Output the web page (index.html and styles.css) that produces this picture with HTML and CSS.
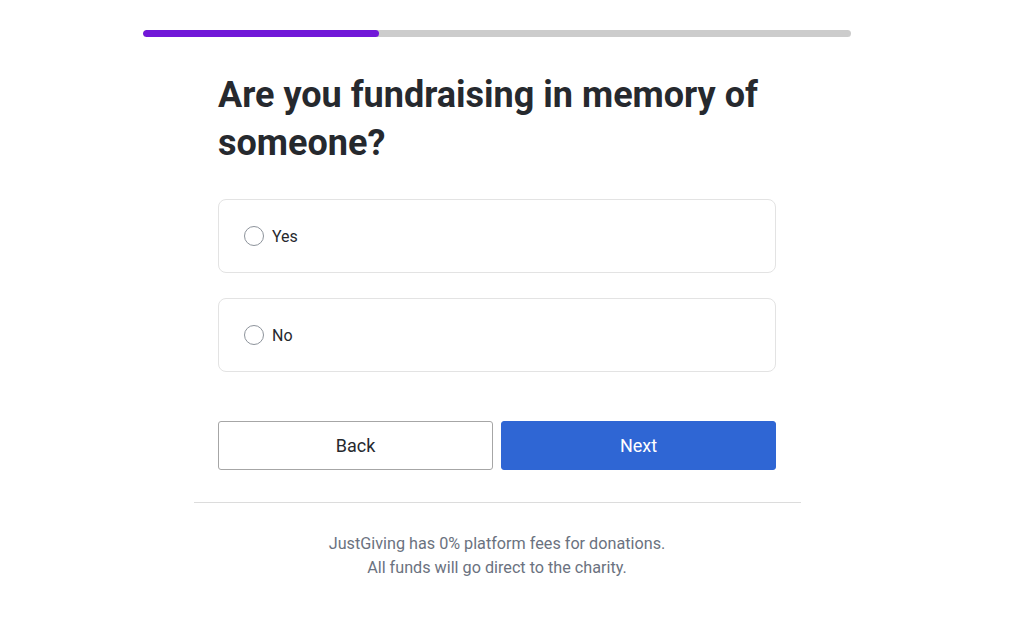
FILE: index.html
```html
<!DOCTYPE html>
<html lang="en">
<head>
<meta charset="utf-8">
<title>Fundraising in memory</title>
<link rel="stylesheet" href="styles.css">
</head>
<body>
<div class="page">
  <div class="progress"><div class="progress-fill" style="width:33.3%"></div></div>
  <div class="content">
    <h1 class="title">Are you fundraising in memory of someone?</h1>
    <div class="options">
      <label class="option"><span class="radio"></span><span class="option-label">Yes</span></label>
      <label class="option"><span class="radio"></span><span class="option-label">No</span></label>
    </div>
    <div class="actions">
      <button class="btn btn-back">Back</button>
      <button class="btn btn-next">Next</button>
    </div>
  </div>
  <hr class="divider">
  <p class="note">JustGiving has 0% platform fees for donations.<br>All funds will go direct to the charity.</p>
</div>
</body>
</html>
```
FILE: styles.css
```css
* { box-sizing: border-box; }
body {
  margin: 0;
  background: #fff;
  font-family: Roboto, "Liberation Sans", sans-serif;
  color: #26292e;
}
.page {
  width: 708px;
  margin-left: 143px;
  padding-top: 30px;
}
.progress {
  height: 7px;
  background: #cccccc;
  border-radius: 4px;
  overflow: hidden;
}
.progress-fill {
  height: 100%;
  background: #7118d8;
  border-radius: 4px;
}
.content {
  width: 558px;
  margin-left: 75px;
}
.title {
  margin: 34px 0 0;
  font-size: 36px;
  font-weight: 700;
  line-height: 48px;
  color: #26292e;
}
.options {
  display: flex;
  flex-direction: column;
  gap: 25px;
  margin-top: 32px;
}
.option {
  display: flex;
  align-items: center;
  height: 74px;
  padding-left: 25px;
  border: 1px solid #e3e3e3;
  border-radius: 8px;
}
.radio {
  width: 20px;
  height: 20px;
  border: 1px solid #8d939b;
  border-radius: 50%;
}
.option-label {
  margin-left: 8px;
  font-size: 16px;
  color: #26292e;
}
.actions {
  display: flex;
  gap: 8px;
  margin-top: 49px;
}
.btn {
  flex: 1;
  height: 49px;
  font-family: Roboto, "Liberation Sans", sans-serif;
  font-size: 18px;
  font-weight: 400;
  border-radius: 3px;
}
.btn-back {
  background: #fff;
  border: 1px solid #a6a6a6;
  color: #26292e;
}
.btn-next {
  background: #2f66d4;
  border: 1px solid #2f66d4;
  color: #fff;
}
.divider {
  width: 607px;
  margin: 32px 0 0 51px;
  border: 0;
  border-top: 1px solid #dcdcdc;
}
.note {
  margin: 29px 0 0;
  text-align: center;
  font-size: 16.2px;
  line-height: 24px;
  color: #6b7280;
}
```
